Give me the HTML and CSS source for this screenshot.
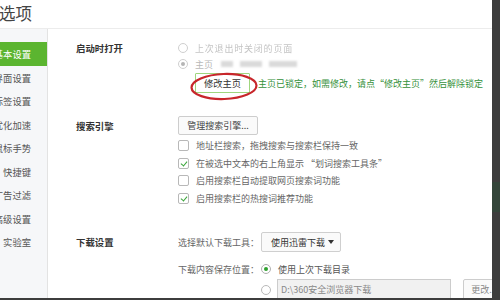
FILE: index.html
```html
<!DOCTYPE html>
<html lang="zh-CN">
<head>
<meta charset="utf-8">
<title>选项</title>
<link rel="stylesheet" href="styles.css">
</head>
<body>
<div class="window">
  <header class="titlebar"><h1 class="title">选项</h1></header>
  <div class="layout">
    <nav class="sidebar">
      <div class="nav-item active">基本设置</div>
      <div class="nav-item">界面设置</div>
      <div class="nav-item">标签设置</div>
      <div class="nav-item">优化加速</div>
      <div class="nav-item">鼠标手势</div>
      <div class="nav-item">快捷键</div>
      <div class="nav-item">广告过滤</div>
      <div class="nav-item">高级设置</div>
      <div class="nav-item">实验室</div>
    </nav>
    <main class="content">
      <section class="section s-startup">
        <div class="sec-label l16">启动时打开</div>
        <div class="sec-body">
          <div class="row r16"><span class="radio disabled"></span><span class="blur-text">上次退出时关闭的页面</span></div>
          <div class="row r16"><span class="radio disabled checked"></span><span class="muted">主页</span><span class="blur-url"><i class="b1"></i><i class="b2"></i><i class="b3"></i></span></div>
          <div class="row lockrow">
            <button class="btn btn-green">修改主页</button>
            <span class="notice">主页已锁定，如需修改，请点“修改主页”然后解除锁定</span>
            <svg class="mark" width="70" height="30" viewBox="0 0 70 30"><ellipse cx="34" cy="14.5" rx="32.5" ry="12.5" fill="none" stroke="#c8262b" stroke-width="2.2" transform="rotate(-2 34 14.5)"/></svg>
          </div>
        </div>
      </section>

      <section class="section s-search">
        <div class="sec-label l19">搜索引擎</div>
        <div class="sec-body">
          <div class="row r19"><button class="btn btn-gray">管理搜索引擎...</button></div>
          <div class="checks">
            <div class="row rchk"><span class="check"></span><span class="opt">地址栏搜索，拖拽搜索与搜索栏保持一致</span></div>
            <div class="row rchk"><span class="check on"></span><span class="opt">在被选中文本的右上角显示 “划词搜索工具条”</span></div>
            <div class="row rchk"><span class="check"></span><span class="opt">启用搜索栏自动提取网页搜索词功能</span></div>
            <div class="row rchk"><span class="check on"></span><span class="opt">启用搜索栏的热搜词推荐功能</span></div>
          </div>
        </div>
      </section>

      <section class="section s-download">
        <div class="sec-label l20">下载设置</div>
        <div class="sec-body">
          <div class="row r20"><span class="sub-label">选择默认下载工具：</span><span class="select">使用迅雷下载<span class="caret"></span></span></div>
          <div class="row r18 rb"><span class="sub-label">下载内容保存位置：</span><span class="radio checked green"></span><span class="opt dark">使用上次下载目录</span></div>
          <div class="row r21 rc"><span class="radio"></span><span class="path">D:\360安全浏览器下载</span><button class="btn btn-gray btn-change">更改...</button></div>
        </div>
      </section>
    </main>
  </div>
</div>
</body>
</html>
```

FILE: styles.css
```css
* { box-sizing: border-box; }
html, body { margin: 0; padding: 0; }
body {
  width: 500px;
  height: 300px;
  overflow: hidden;
  background: linear-gradient(to bottom, #3d3d3d 0, #3d3d3d 182px, #34453a 182px, #34453a 212px, #3d3d3d 212px);
  font-family: "Noto Sans CJK SC", "Noto Sans", sans-serif;
  font-size: 9px;
  color: #555;
}
.window {
  width: 492px;
  height: 298px;
  background: #fff;
  display: flex;
  flex-direction: column;
  overflow: hidden;
}
.titlebar {
  height: 29px;
  border-bottom: 1px solid #ececec;
  flex: none;
}
.title {
  margin: 0;
  font-weight: normal;
  font-size: 16.5px;
  line-height: 27px;
  color: #444;
  margin-left: -1px;
}
.layout {
  flex: 1;
  display: flex;
  min-height: 0;
}
.sidebar {
  width: 48px;
  flex: none;
  background: #f6f7f9;
  border-right: 1px solid #e3e3e3;
  padding-top: 13px;
  overflow: hidden;
}
.nav-item {
  height: 23.5px;
  display: flex;
  align-items: center;
  justify-content: flex-end;
  padding-right: 16px;
  white-space: nowrap;
  color: #555;
  font-size: 9.3px;
}
.nav-item.active {
  background: #5bb530;
  color: #fff;
  height: 24px;
}
.content {
  flex: 1;
  padding: 11px 0 0 28px;
  position: relative;
}
.section {
  display: grid;
  grid-template-columns: 102px 1fr;
}
.s-search { margin-top: 23px; }
.s-download { margin-top: 25px; }
.sec-label {
  font-weight: bold;
  color: #333;
  white-space: nowrap;
  font-size: 9.4px;
}
.l16 { line-height: 16px; }
.l19 { line-height: 19px; padding-top: 1px; }
.l20 { line-height: 20px; }
.row {
  display: flex;
  align-items: center;
  white-space: nowrap;
}
.r16 { height: 16px; }
.r18 { height: 18px; }
.r19 { height: 19px; }
.r20 { height: 20px; }
.r21 { height: 21px; }
.rb { margin-top: 8px; }
.rc { margin-top: 1px; }
.radio {
  width: 10px;
  height: 10px;
  border-radius: 50%;
  border: 1px solid #b9b9b9;
  background: #fff;
  flex: none;
  margin-right: 7px;
  position: relative;
}
.radio.disabled { border-color: #cfcfcf; }
.radio.checked::after {
  content: "";
  position: absolute;
  left: 2px;
  top: 2px;
  width: 4px;
  height: 4px;
  border-radius: 50%;
  background: #b5b5b5;
}
.radio.green { border-color: #b0b0b0; }
.radio.green::after { background: #2fa12f; }
.blur-text {
  color: #c4c4c4;
  letter-spacing: 0.8px;
  filter: blur(0.6px);
}
.muted { color: #b8b8b8; }
.blur-url {
  display: flex;
  gap: 7px;
  margin-left: 8px;
  filter: blur(1px);
}
.blur-url i { display: block; height: 6px; background: #dadada; }
.blur-url .b1 { width: 12px; }
.blur-url .b2 { width: 22px; }
.blur-url .b3 { width: 28px; }
.lockrow {
  height: 20px;
  margin-top: 1px;
  position: relative;
}
.btn {
  font-family: inherit;
  font-size: 9px;
  padding: 0;
  cursor: pointer;
}
.btn-green {
  margin-left: 17px;
  width: 55px;
  height: 20px;
  background: #fff;
  border: 1px solid #9fd67e;
  color: #333;
  border-radius: 1px;
  font-size: 9.3px;
}
.notice {
  margin-left: 8px;
  color: #35903a;
}
.mark {
  position: absolute;
  left: 12px;
  top: -1px;
}
.btn-gray {
  background: #fafafa;
  border: 1px solid #cdcdcd;
  border-radius: 2px;
  color: #444;
  height: 19px;
  width: 80px;
}
.checks { margin-top: 2px; }
.rchk { height: 17.5px; }
.check {
  width: 11px;
  height: 11px;
  border: 1px solid #b8b8b8;
  border-radius: 2px;
  background: #fff;
  flex: none;
  margin-right: 7px;
  position: relative;
}
.check.on::after {
  content: "";
  position: absolute;
  left: 3px;
  top: 1px;
  width: 3px;
  height: 5px;
  border-right: 1.6px solid #3aa53a;
  border-bottom: 1.6px solid #3aa53a;
  transform: rotate(40deg);
}
.opt { color: #666; }
.opt.dark { color: #555; }
.sub-label {
  width: 83px;
  flex: none;
  color: #666;
}
.select {
  width: 80px;
  height: 20px;
  border: 1px solid #cfcfcf;
  border-radius: 2px;
  background: #fafafa;
  display: flex;
  align-items: center;
  padding-left: 9px;
  color: #333;
  position: relative;
}
.caret {
  position: absolute;
  right: 6px;
  top: 7px;
  width: 0;
  height: 0;
  border-left: 3.5px solid transparent;
  border-right: 3.5px solid transparent;
  border-top: 4px solid #333;
}
.rc .radio { margin-left: 83px; margin-right: 6px; }
.path {
  width: 174px;
  height: 21px;
  background: #f1f1f1;
  border: 1px solid #cccccc;
  display: flex;
  align-items: center;
  padding-left: 3px;
  color: #888;
  flex: none;
}
.btn-change {
  margin-left: 12px;
  width: 42px;
  height: 21px;
  color: #888;
  flex: none;
}
```
